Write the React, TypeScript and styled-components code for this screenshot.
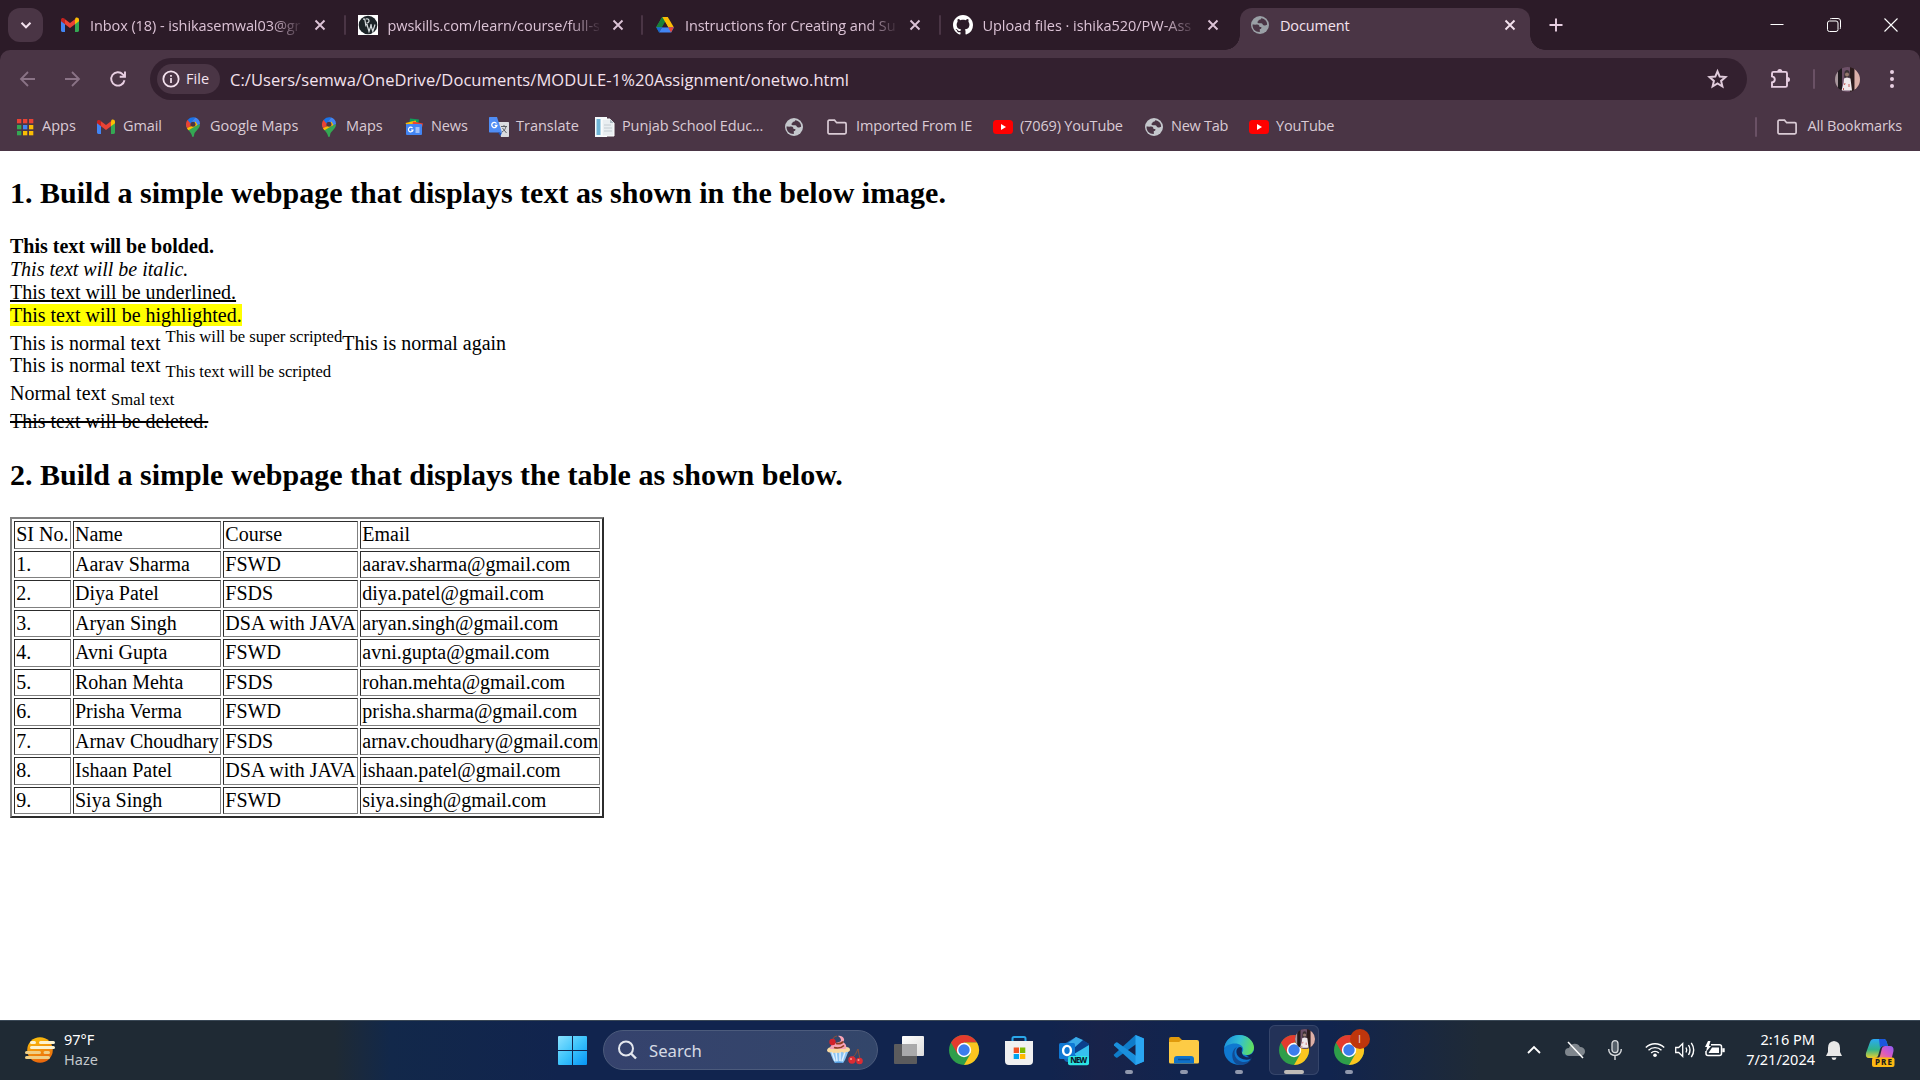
import React from 'react';
import styled, { createGlobalStyle } from 'styled-components';

const Global = createGlobalStyle`
  body { margin: 0; background: #fff; overflow: hidden; }
  * { box-sizing: border-box; }
`;

const ui = `'Open Sans', 'Noto Sans', sans-serif`;

const Screen = styled.div`
  width: 1920px;
  height: 1080px;
  display: flex;
  flex-direction: column;
  overflow: hidden;
  background: #2c1b28;
`;

/* ---------- tab strip ---------- */

const TabStrip = styled.div`
  height: 50px;
  flex: none;
  display: flex;
  align-items: stretch;
  padding-left: 8px;
  background: #2c1b28;
  font-family: ${ui};
`;
const TabSearch = styled.button`
  width: 35px;
  height: 34px;
  margin: 8px 5px 0 0;
  padding: 0;
  border: 0;
  border-radius: 12px;
  background: #4a3545;
  display: grid;
  place-items: center;
`;
const Tab = styled.div<{ $last?: boolean }>`
  width: 297.5px;
  flex: none;
  display: flex;
  align-items: center;
  padding: 0 0 0 12px;
  border: 0;
  &::after {
    content: '';
    width: 2px;
    height: 20px;
    border-radius: 1px;
    margin-left: auto;
    background: ${p => (p.$last ? 'transparent' : '#4a3545')};
  }
`;
const TabTitle = styled.span<{ $ls: number }>`
  width: 211px;
  margin-left: 10px;
  padding-top: 1px;
  font-size: 14.5px;
  letter-spacing: ${p => p.$ls}px;
  line-height: 20px;
  color: #dcc3d6;
  white-space: nowrap;
  mask-image: linear-gradient(90deg, #000 calc(100% - 30px), transparent calc(100% + 3px));
`;
const TabClose = styled.span`
  width: 20px;
  height: 20px;
  margin-left: 9px;
  display: grid;
  place-items: center;
`;
const ActiveTab = styled.div`
  width: 290px;
  height: 42px;
  flex: none;
  margin-top: 8px;
  padding: 0 10px 8px;
  display: flex;
  align-items: center;
  justify-content: space-between;
  border-radius: 12px 12px 0 0;
  background: #4a3545;
  color: #f4e2ee;
  font-size: 14.5px;
`;
const ActiveLabel = styled.span`
  display: flex;
  align-items: center;
  gap: 10px;
  letter-spacing: -0.15px;
`;
const Flare = styled.span<{ $side: 'left' | 'right' }>`
  width: 15px;
  height: 15px;
  flex: none;
  align-self: flex-end;
  margin-left: ${p => (p.$side === 'left' ? '-13px' : '0')};
  background: radial-gradient(circle at ${p => (p.$side === 'left' ? '0 0' : '100% 0')}, transparent 14.5px, #4a3545 15px);
`;
const NewTab = styled.span`
  width: 20px;
  height: 20px;
  margin: 15px 0 0 1px;
`;
const WindowControls = styled.div`
  margin-left: auto;
  padding-right: 1px;
  display: flex;
`;
const WindowButton = styled.span`
  width: 57px;
  height: 49px;
  display: grid;
  place-items: center;
`;

/* ---------- toolbar ---------- */

const Toolbar = styled.div`
  height: 101px;
  flex: none;
  display: flex;
  flex-direction: column;
  border-radius: 10px 10px 0 0;
  background: #4a3545;
  font-family: ${ui};
`;
const NavRow = styled.div`
  height: 51px;
  display: flex;
  align-items: center;
  padding: 7px 0 0 18px;
`;
const NavIcon = styled.span<{ $gap: number }>`
  width: 20px;
  height: 20px;
  margin-right: ${p => p.$gap}px;
`;
const Omnibox = styled.div`
  width: 1597px;
  height: 42px;
  display: flex;
  align-items: center;
  padding: 0 19px 0 7px;
  border-radius: 21px;
  background: #33202f;
`;
const FileChip = styled.span`
  width: 63px;
  height: 30px;
  display: flex;
  align-items: center;
  gap: 6px;
  padding: 0 0 1px 5px;
  border-radius: 15px;
  background: #4a3545;
  color: #f4e2ee;
  font-size: 14.5px;
  font-weight: 500;
  letter-spacing: 0.1px;
`;
const Url = styled.span`
  margin-left: 10px;
  padding-top: 1px;
  flex: 1;
  color: #f4e2ee;
  font-size: 16.5px;
  letter-spacing: 0.07px;
  line-height: 24px;
`;
const Extension = styled.span`
  width: 22px;
  height: 22px;
  margin-left: 23px;
`;
const Divider = styled.span<{ $ml: number; $mr: number }>`
  width: 2px;
  height: 20px;
  margin: 0 ${p => p.$mr}px 0 ${p => p.$ml}px;
  border-radius: 1px;
  background: #6a5165;
`;
const MenuDots = styled.span`
  width: 20px;
  height: 20px;
  margin-left: 22px;
`;

const BookmarkRow = styled.div`
  height: 50px;
  display: flex;
  align-items: center;
  padding: 1px 0 0 15px;
`;
const Bookmark = styled.span<{ $w: number; $gap?: number }>`
  width: ${p => p.$w}px;
  flex: none;
  display: flex;
  align-items: center;
  gap: ${p => p.$gap ?? 7}px;
  color: #dacbd5;
  white-space: nowrap;
`;
const BookmarkText = styled.span<{ $ls: number }>`
  padding-bottom: 2px;
  font-size: 14.5px;
  line-height: 20px;
  letter-spacing: ${p => p.$ls}px;
`;
const BookmarkEnd = styled.div`
  margin-left: auto;
  display: flex;
  align-items: center;
`;

/* ---------- document ---------- */

const Page = styled.main`
  flex: 1;
  min-height: 0;
  padding: 0 10px;
  background: #fff;
  color: #000;
  font-family: 'Liberation Serif', 'Times New Roman', serif;
  font-size: 20px;
`;
const Heading = styled.h2`
  margin: 24.9px 0;
  font-size: 30px;
  font-weight: bold;
`;
const Marked = styled.mark`
  background: #ff0;
  color: #000;
`;
const Underlined = styled.u`
  text-decoration-thickness: 2px;
`;
const Deleted = styled.del`
  text-decoration-thickness: 2px;
`;
const Raised = styled.sup`
  font-size: 16.667px;
`;
const Lowered = styled.sub`
  font-size: 16.667px;
`;
const Table = styled.table`
  border: 2px solid;
  border-color: #808080 #2c2c2c #2c2c2c #808080;
  border-spacing: 2.5px;
  font-size: 20px;
`;
const Cell = styled.td`
  padding: 1.25px;
  border: 1px solid;
  border-color: #2c2c2c #808080 #808080 #2c2c2c;
`;

/* ---------- taskbar ---------- */

const Taskbar = styled.footer`
  height: 60px;
  flex: none;
  display: flex;
  align-items: center;
  box-shadow: inset 0 1px 0 #3a4856;
  background: linear-gradient(90deg, #1f2a34 0, #1f2a34 335px, #12284a 390px, #11244e 560px, #11244e 1050px, #18234a 1100px, #11244e 1180px, #11244e 1330px, #1f2a36 1480px, #1f2a36 100%);
  color: #fff;
  font-family: 'Noto Sans', 'Open Sans', sans-serif;
`;
const Weather = styled.div`
  width: 558px;
  display: flex;
  align-items: center;
  gap: 9px;
  padding-left: 25px;
`;
const TwoLines = styled.div<{ $right?: boolean }>`
  display: flex;
  flex-direction: column;
  padding-bottom: 3px;
  text-align: ${p => (p.$right ? 'right' : 'left')};
  font-size: 14.5px;
  line-height: 20px;
`;
const Muted = styled.span`
  color: #c3c8cc;
`;
const SearchBox = styled.div`
  width: 275px;
  height: 40px;
  margin: 0 16px 0 16px;
  display: flex;
  align-items: center;
  border: 1px solid #4c5b7c;
  border-radius: 20px;
  padding: 0 14px;
  background: linear-gradient(90deg, #35426d, #33466a);
`;
const SearchText = styled.span`
  flex: 1;
  margin-left: 11px;
  color: #d5dae4;
  font-size: 16.7px;
`;
const Apps = styled.div`
  display: flex;
  margin-left: 12px;
`;
const AppSlot = styled.span<{ $active?: boolean }>`
  width: ${p => (p.$active ? 50 : 55)}px;
  height: 50px;
  flex: none;
  margin: 0 ${p => (p.$active ? 2.5 : 0)}px;
  display: flex;
  flex-direction: column;
  align-items: center;
  justify-content: space-between;
  padding: 10px 0 1px;
  border-radius: 6px;
  box-shadow: ${p => (p.$active ? 'inset 0 0 0 1px #35456a' : 'none')};
  background: ${p => (p.$active ? '#233258' : 'transparent')};
`;
const Running = styled.span<{ $w: number; $c: string }>`
  width: ${p => p.$w}px;
  height: 4px;
  border-radius: 2px;
  background: ${p => p.$c};
`;
const Tray = styled.div`
  margin-left: auto;
  display: flex;
  align-items: center;
  padding-right: 25px;
`;
const TrayIcon = styled.span<{ $w: number; $ml: number }>`
  width: ${p => p.$w}px;
  height: 24px;
  margin-left: ${p => p.$ml}px;
  display: grid;
  place-items: center;
`;
const Clock = styled(TwoLines)`
  width: 72px;
  margin-left: 18px;
  white-space: nowrap;
`;

/* ---------- icons ---------- */

const Drawing = styled.svg`
  display: block;
  flex: none;
  overflow: visible;
`;
const Svg = ({ w = 20, h = w, box = '0 0 20 20', children }: { w?: number; h?: number; box?: string; children: React.ReactNode }) => (
  <Drawing width={w} height={h} viewBox={box} fill="none">{children}</Drawing>
);
const Close = ({ c = '#dcc3d6' }) => (
  <Svg><path d="M5.500 5.500l9 9M14.500 5.500l-9 9" stroke={c} strokeWidth="1.900" /></Svg>
);
const Gmail = () => (
  <Svg>
    <path d="M1 5v10.600c0 .8.600 1.400 1.400 1.400H5V8z" fill="#4285f4" />
    <path d="M19 5v10.600c0 .8-.6 1.400-1.400 1.400H15V8z" fill="#34a853" />
    <path d="M15 4.200v5l4-3V4.700c0-1.900-2.200-2.800-3.500-1.700z" fill="#fbbc04" />
    <path d="M5 9.200v-5l5 3.800 5-3.800v5L10 13z" fill="#ea4335" />
    <path d="M1 4.700v1.500l4 3v-5L4.500 3.500C3 2.400 1 3 1 4.700z" fill="#c5221f" />
  </Svg>
);
const Drive = () => (
  <Svg>
    <path d="M7.200 2h5.600L10 6.900 4.200 17 1.200 12.300z" fill="#34a853" />
    <path d="M7.200 2h5.600l6 10.300h-5.700z" fill="#fbbc04" />
    <path d="M7.200 2L10 6.900 7 12.300H1.200z" fill="#188038" />
    <path d="M7 12.300h12l-2.800 5.200H4z" fill="#4285f4" />
    <path d="M1.200 12.300H7l-3 5.200z" fill="#1967d2" />
    <path d="M13.100 12.300h5.700L16 17.500z" fill="#ea4335" />
    <path d="M10 7l3 5.300H7z" fill="#2c1b28" />
  </Svg>
);
const Github = () => (
  <Svg w={20} box="0 0 16 16">
    <path fill="#fff" d="M8 0C3.580 0 0 3.580 0 8c0 3.540 2.290 6.530 5.470 7.590.4.070.55-.17.55-.38 0-.19-.01-.82-.01-1.490-2.010.37-2.530-.49-2.690-.94-.09-.23-.48-.94-.82-1.130-.28-.15-.68-.52-.01-.53.63-.01 1.080.58 1.230.82.72 1.210 1.870.87 2.330.66.07-.52.28-.87.51-1.070-1.780-.2-3.640-.89-3.640-3.950 0-.87.31-1.590.82-2.150-.08-.2-.36-1.020.08-2.120 0 0 .67-.21 2.200.82.64-.18 1.320-.27 2-.27s1.360.09 2 .27c1.530-1.040 2.200-.82 2.200-.82.44 1.100.16 1.920.08 2.120.51.56.82 1.270.82 2.150 0 3.070-1.870 3.750-3.650 3.950.29.25.54.73.54 1.480 0 1.070-.01 1.930-.01 2.200 0 .21.15.46.55.38A8.010 8.010 0 0 0 16 8c0-4.420-3.580-8-8-8z" />
  </Svg>
);
const Globe = ({ c = '#c4c7cc', bg = '#4a3545' }) => (
  <Svg>
    <circle cx="10" cy="10" r="9" fill={c} />
    <path d="M2.500 9.500c2 .2 3.400.2 4.500 0 2.400.1 2.500 1.500 2.500 2.500h1.700c.8 1.300-.3 2-1.400 2.100v2.900c-4.300.2-7.400-2.800-7.300-7.500z" fill={bg} />
    <path d="M11.200 3.200c-.2 1.300-1 1.500-2.100 1.600-.8.300-.3 1.500-1.500 1.700-.9 1.500 1.400 2 3.400 1.800 1.900 0 1.600 2.300 3.500 2.300 1 0 1.500-.8 2.600-.9.300-2.900-2-6-5.900-6.500z" fill={bg} />
  </Svg>
);
const Pw = () => (
  <Svg>
    <rect width="20" height="20" fill="#fff" />
    <circle cx="10" cy="10" r="9.300" fill="#1c2428" />
    <path d="M5 4.200h1.800L8 11.500M8 4c3.200-1.200 4.500 3.600.5 4.200" stroke="#d5dbdd" strokeWidth="1.200" />
    <path d="M7.500 9.500h2M9 9.500l2 7 2-6 1.800 6 2.200-7M12 10h2" stroke="#d5dbdd" strokeWidth="1.200" />
  </Svg>
);
const AppsGrid = () => (
  <Svg>
    {['#ea4335', '#ea4335', '#ea4335', '#34a853', '#4285f4', '#fbbc04', '#34a853', '#fbbc04', '#fbbc04'].map((c, i) => (
      <rect key={i} x={2 + (i % 3) * 6} y={2 + Math.floor(i / 3) * 6} width="4.300" height="4.300" fill={c} />
    ))}
  </Svg>
);
const Pin = () => (
  <Svg>
    <path d="M5 12.300C3.700 10.600 3 9.200 3 7.500L6.500 9c.5 2 1 3 2 4.500l2 5.500c-.6 0-.8-.6-1-1.500-.7-2.200-2.600-3-4.500-5.200z" fill="#34a853" />
    <path d="M10 20c-.9 0-1-1-1.300-2-.8-2.200-2.100-3.500-3.500-5.300L12.500 9 17 7c0 5.500-5.500 7-5.900 11-.2 1-.3 2-1.100 2z" fill="#34a853" />
    <path d="M3 7.300C3 5.500 3.700 4 4.700 2.800L8.500 6l-1 3-3 3C3.500 10.600 3 9 3 7.300z" fill="#ea4335" />
    <path d="M4.600 3C7 0 10 0 12.300.5L7.500 6.500z" fill="#1a73e8" />
    <path d="M12.200.5c2.500.8 4.800 3 4.800 6.500L12.500 9 8 5.500z" fill="#4285f4" />
    <path d="M7.500 9.500l5-5 2 3.500-9 5.200c-.8-.8-1.200-1.500-1.500-2z" fill="#fbbc04" />
    <circle cx="10" cy="7.200" r="2.500" fill="#4a3545" />
  </Svg>
);
const News = () => (
  <Svg>
    <path d="M6 1.500l9 1-1 6H5z" fill="#0f9d58" />
    <path d="M1.500 6l10-2.500L14 9H3z" fill="#fbbc04" />
    <path d="M9 4.500l10 2-1 4H8z" fill="#ea4335" />
    <rect x="2" y="7" width="16" height="11" rx="1" fill="#4285f4" />
    <path d="M8.500 11a2.300 2.300 0 1 0 .5 2H7M11.500 11h4M11.500 13h4M11.500 15h4" stroke="#fff" strokeWidth="1.200" />
  </Svg>
);
const Translate = () => (
  <Svg>
    <path d="M8 5h11c.6 0 1 .4 1 1v13c0 .6-.4 1-1 1h-7z" fill="#dadce0" />
    <path d="M1 0h7l5 15.500H1c-.6 0-1-.4-1-1V1c0-.6.400-1 1-1z" fill="#4f8df5" />
    <path d="M9 15.500h4L11.500 19z" fill="#1a56c4" />
    <path d="M7.500 6.500a2.600 2.600 0 1 0 .4 2H5.700" stroke="#fff" strokeWidth="1.300" />
    <path d="M12 9.500h6M15 8v1.500M17 9.500c-.5 2.500-2 4.500-4 5.500M13.500 11l4 5" stroke="#5f6368" strokeWidth="1" />
  </Svg>
);
const Paper = () => (
  <Svg>
    <rect x="0" y="0" width="12" height="20" fill="#f5fafc" />
    <rect x="1.500" y="2" width="4" height="16" fill="#6fb4d6" />
    <path d="M7 2h8l4 4v13H7z" fill="#e9eef1" stroke="#fff" strokeWidth="1" />
    <path d="M9 8h7M9 11h8M9 14h8" stroke="#c3ccd2" />
    <path d="M15 2v4h4z" fill="#aebac2" />
  </Svg>
);
const Folder = () => (
  <Svg>
    <path d="M1 4.500c0-.8.500-1.300 1.200-1.300h5.300l2.200 2.500h8.200c.7 0 1.200.5 1.200 1.200v8.700c0 .7-.5 1.200-1.200 1.200H2.200c-.7 0-1.200-.5-1.200-1.200z" stroke="#dacbd5" strokeWidth="1.700" />
  </Svg>
);
const YouTube = () => (
  <Svg>
    <rect x="0" y="3" width="20" height="14" rx="3.500" fill="#f00" />
    <path d="M8 7v6l5-3z" fill="#fff" />
  </Svg>
);
const Avatar = ({ s }: { s: number }) => (
  <Svg w={s} box="0 0 25 25">
    <clipPath id={`av${s}`}><circle cx="12.500" cy="12.500" r="12.500" /></clipPath>
    <g clipPath={`url(#av${s})`}>
      <path d="M0 0h25v25H0z" fill="#46303a" />
      <path d="M0 0h3v25H0z" fill="#a8979d" />
      <path d="M3 0h4v25H3z" fill="#1f1a1e" />
      <path d="M7 0h8v25H7z" fill="#6d5068" />
      <path d="M15 0h4.500v25H15z" fill="#2c1c1c" />
      <path d="M19.500 0h5.500v25h-5.500z" fill="#dcb0a8" />
      <path d="M9.500 5.500c0-3.500 5-3.500 5 0l.5 5H9z" fill="#3b3236" />
      <circle cx="12" cy="7.500" r="2" fill="#94786e" />
      <path d="M9 11.500l3-1 3.500 1 1.500 12H6.500l2-7z" fill="#efe9ec" />
      <path d="M10 16l-.5 2M14 17v3M8.500 21v2" stroke="#c65a55" />
    </g>
  </Svg>
);
const Chrome = () => (
  <Svg w={30} box="0 0 30 30">
    <circle cx="15" cy="15" r="15" fill="#2e9e4a" />
    <path d="M2 7.500A15 15 0 0 1 28 7.500H15L8.500 18.700z" fill="#e33b2e" />
    <path d="M28 7.500A15 15 0 0 1 15 30L21.500 18.700 15 7.500z" fill="#fcc61f" />
    <circle cx="15" cy="15" r="7.200" fill="#fff" />
    <circle cx="15" cy="15" r="5.700" fill="#3b7ded" />
  </Svg>
);
const BadgeHost = styled.span`
  position: relative;
  width: 30px;
  height: 30px;
`;
const Badge = styled.span`
  position: absolute;
  left: 16px;
  top: -6px;
  width: 20px;
  height: 20px;
`;
const BadgeLetter = styled.span`
  display: grid;
  place-items: center;
  width: 20px;
  height: 20px;
  border-radius: 50%;
  background: #bf360c;
  color: #e8c5b8;
  font: 11px 'Liberation Sans', Arial, sans-serif;
`;
const ChromeBadge = ({ children }: { children: React.ReactNode }) => (
  <BadgeHost><Chrome /><Badge>{children}</Badge></BadgeHost>
);
const Start = () => (
  <Svg w={29} box="0 0 29 29">
    <defs><linearGradient id="win" x1="0" y1="0" x2="29" y2="29" gradientUnits="userSpaceOnUse"><stop stopColor="#8be2ff" /><stop offset=".5" stopColor="#3cc3fb" /><stop offset="1" stopColor="#0695f5" /></linearGradient></defs>
    <path d="M1 0h13v14H0V1q0-1 1-1zM15 0h13q1 0 1 1v13H15zM0 15h14v14H1q-1 0-1-1zM15 15h14v13q0 1-1 1H15z" fill="url(#win)" />
  </Svg>
);
const Sundae = () => (
  <Svg w={36} h={30} box="0 0 36 30">
    <path d="M2 15h20l-4 10-2 3H8l-2-3z" fill="#8cc4f2" />
    <path d="M5 17l3 9M9 17l1 9M13 17v9M18 17l-3 9" stroke="#dff1ff" strokeWidth="1.500" />
    <path d="M7 28q5-3 10 0z" fill="#4d97dc" />
    <path d="M0 15q1-3 5-3h14q4 0 4 3c-1 3-4 1-6 3-2-2-4 0-6 0-3-1-4 1-6-1-3 1-5 0-5-2z" fill="#f8d9a0" />
    <path d="M3 14c0-4 4-6 9-7 4-1 1-5-1-6 5-1 8 4 5 6 4 2 4 7 2 7z" fill="#f7a3b6" />
    <path d="M7 12.500c4 1 8 0 10-2M9 8.500c3 .5 6 0 7-2" stroke="#8f3f22" strokeWidth="1.700" />
    <circle cx="5.500" cy="7" r="3.200" fill="#d3222b" />
    <path d="M6 4q1-3 4-3M25 23q4-3 6-9 1 6 2 10" stroke="#87503a" strokeWidth="1" />
    <circle cx="25" cy="25" r="3.700" fill="#dd2c33" /><circle cx="32.500" cy="26" r="3.300" fill="#dd2c33" />
    <circle cx="24" cy="24" r="1" fill="#ff9c94" /><circle cx="31.500" cy="25" r="1" fill="#ff9c94" />
  </Svg>
);
const TaskView = () => (
  <Svg w={30} box="0 0 30 30">
    <defs><linearGradient id="tv" x2="1" y2="1"><stop stopColor="#fff" /><stop offset="1" stopColor="#dcdcdc" /></linearGradient></defs>
    <rect x="8" y="1" width="22" height="20" rx="1" fill="url(#tv)" />
    <rect x="0" y="9" width="23" height="20" rx="1" fill="#5b5b5d" />
    <path d="M8 9h15v12H8z" fill="#a9a9ab" />
  </Svg>
);
const Store = () => (
  <Svg w={30} box="0 0 30 30">
    <path d="M8.500 8V3.500q0-1.500 1.500-1.500h10q1.500 0 1.500 1.500V8" stroke="#2aa7ea" strokeWidth="2" />
    <path d="M1 6h28v20q0 4-4 4H5q-4 0-4-4z" fill="#f0f0f0" />
    <path d="M9.700 12.500H15V18H9.700z" fill="#f25022" /><path d="M16 12.500h5.300V18H16z" fill="#7fba00" />
    <path d="M9.700 19H15v5H9.700z" fill="#00a4ef" /><path d="M16 19h5.300v5H16z" fill="#ffb900" />
  </Svg>
);
const Outlook = () => (
  <Svg w={30} h={30} box="0 0 30 30">
    <path d="M5 9L17 2l13 7v14q0 4-4 4H9q-4 0-4-4z" fill="#1567b8" />
    <path d="M14 10L24 5l6 4v3L16 20z" fill="#0b3f8c" /><path d="M15 19l15-9v13l-6 4z" fill="#36c0ee" />
    <path d="M9 8l8-6 7 3-9 8z" fill="#3aaae8" />
    <rect x="0" y="8" width="16" height="16" rx="1.500" fill="#0f78d4" />
    <ellipse cx="8" cy="15.500" rx="3.900" ry="4.600" stroke="#fff" strokeWidth="2.400" />
    <rect x="9" y="21" width="21" height="9.200" rx="2" fill="#2ce4e4" />
    <text x="11.300" y="28.400" fontSize="8" fontWeight="800" textLength="17" fill="#0a1a2e" fontFamily="Noto Sans, sans-serif">NEW</text>
  </Svg>
);
const VsCode = () => (
  <Svg w={30} box="0 0 30 30">
    <path d="M21.500 0L0 19.500q-.3 1 .2 1.500l1.800 1.500q.7.500 1.500 0L30 3.500z" fill="#0f7cc9" />
    <path d="M21.500 30L0 10.500q-.3-1 .2-1.500L2 7.500q.7-.5 1.500 0L30 26.500z" fill="#1a8fdc" />
    <path d="M21.500 0L30 3.500v23L21.500 30z" fill="#2aa6f2" />
  </Svg>
);
const Explorer = () => (
  <Svg w={30} box="0 0 30 30">
    <path d="M0 4q0-2 2-2h8l3 3v6H0z" fill="#e09a0c" />
    <path d="M0 7h10l3-2h15q2 0 2 2v20q0 1.500-1.500 1.500h-27Q0 28.500 0 27z" fill="#fdcb45" />
    <path d="M5 28.500V24q0-3 3-3h14q3 0 3 3v4.500z" fill="#0f72c9" />
    <path d="M9 24.500h12" stroke="#0a4d94" strokeWidth="1.500" />
  </Svg>
);
const Edge = () => (
  <Svg w={30} box="0 0 30 30">
    <defs>
      <linearGradient id="eg" x1="0" y1=".3" x2="1" y2=".5"><stop stopColor="#1b90dc" /><stop offset=".5" stopColor="#32bfd4" /><stop offset="1" stopColor="#62e05a" /></linearGradient>
    </defs>
    <circle cx="15" cy="15" r="15" fill="#0f78d0" />
    <path d="M30 15q-1 5-8 5.500l6.500 3.200Q31 19 30 15z" fill="#11244e" />
    <path d="M.2 13C1.500 5 7.500 0 15 0c9 0 15 6.500 15 12.500 0 5-4 7.500-7.500 7.500-3 0-4.500-1-4.500-2 0-.8 1.200-1.500 1.200-3.700C19.200 11 15.500 8.500 11 8.500 5.500 8.500 1.500 11 .2 13z" fill="url(#eg)" />
    <path d="M13 12c-4 3-3.500 12 4 14.500 4 1.300 8 0 10.500-2.500-2.500 4-7 6.500-12 6C7 29 6 15 13 12z" fill="#124c94" />
    <path d="M18 18c-1-3 1.500-5-1.500-6-5 0-5.500 7-1 10.500 5 3 10 2.500 12.500.5.500-1 .5-1.500-.5-1.500-4 2-9 0-9.500-3.500z" fill="#11275a" />
  </Svg>
);
const Haze = () => (
  <Svg w={30} h={26} box="0 0 30 26">
    <defs><linearGradient id="sun" x2=".3" y2="1"><stop stopColor="#fcc70c" /><stop offset="1" stopColor="#ea6a0c" /></linearGradient></defs>
    <circle cx="15" cy="13" r="12.800" fill="url(#sun)" />
    <path d="M6.500 5.500h3M15.500 5.500h13M6.500 10.500h22" stroke="#fdf3d0" strokeWidth="3" strokeLinecap="round" />
    <path d="M1.500 15.500h13M20 15.500h3.500M1.500 20.500h22" stroke="#f0cf85" strokeWidth="3" strokeLinecap="round" />
  </Svg>
);
const Copilot = () => (
  <Svg w={30} h={30} box="0 0 30 30">
    <defs>
      <linearGradient id="c1" x2="0" y2="1"><stop stopColor="#2ba9f5" /><stop offset=".55" stopColor="#30b48c" /><stop offset="1" stopColor="#e9cf2d" /></linearGradient>
      <linearGradient id="c2" x1="1" x2="0" y2="1"><stop stopColor="#8b5cf6" /><stop offset=".5" stopColor="#d958c4" /><stop offset="1" stopColor="#fb8a5c" /></linearGradient>
    </defs>
    <path d="M9 1h10q2 0 3 4l1 3h-5q-2 0-3 3l-2 7q-1 2-3 2H4q-4 0-3-5L5 4q1-3 4-3z" fill="url(#c1)" />
    <path d="M14 1h5q2 0 3 4l1 3h-5q-2 0-3 2z" fill="#1b56dd" />
    <path d="M20 8h5q4 0 3.500 5l-2 8H12q2 0 3-3l2-8q1-2 3-2z" fill="url(#c2)" />
    <rect x="7" y="19.500" width="22.500" height="9.500" rx="2" fill="#fdb813" />
    <text x="10" y="27.300" fontSize="8" fontWeight="800" textLength="17" fill="#1c1c1c" fontFamily="Noto Sans, sans-serif">PRE</text>
  </Svg>
);

/* ---------- data ---------- */

const tabs = [
  { icon: <Gmail />, title: 'Inbox (18) - ishikasemwal03@gr', ls: -0.08 },
  { icon: <Pw />, title: 'pwskills.com/learn/course/full-s', ls: -0.06 },
  { icon: <Drive />, title: 'Instructions for Creating and Su', ls: -0.12 },
  { icon: <Github />, title: 'Upload files · ishika520/PW-Ass', ls: -0.04 },
];
const bookmarks = [
  { icon: <AppsGrid />, text: 'Apps', w: 81, ls: 0 },
  { icon: <Gmail />, text: 'Gmail', w: 87, ls: -0.1 },
  { icon: <Pin />, text: 'Google Maps', w: 136, ls: 0 },
  { icon: <Pin />, text: 'Maps', w: 85, ls: -0.1 },
  { icon: <News />, text: 'News', w: 85, ls: -0.1 },
  { icon: <Translate />, text: 'Translate', w: 106, ls: 0 },
  { icon: <Paper />, text: 'Punjab School Educ...', w: 189, ls: -0.12 },
  { icon: <Globe />, text: '', w: 43, ls: 0 },
  { icon: <Folder />, text: 'Imported From IE', w: 166, gap: 9, ls: -0.14 },
  { icon: <YouTube />, text: '(7069) YouTube', w: 151, ls: -0.16 },
  { icon: <Globe />, text: 'New Tab', w: 105, ls: -0.25 },
  { icon: <YouTube />, text: 'YouTube', w: 90, ls: -0.2 },
];
const rows = [
  ['SI No.', 'Name', 'Course', 'Email'],
  ['1.', 'Aarav Sharma', 'FSWD', 'aarav.sharma@gmail.com'],
  ['2.', 'Diya Patel', 'FSDS', 'diya.patel@gmail.com'],
  ['3.', 'Aryan Singh', 'DSA with JAVA', 'aryan.singh@gmail.com'],
  ['4.', 'Avni Gupta', 'FSWD', 'avni.gupta@gmail.com'],
  ['5.', 'Rohan Mehta', 'FSDS', 'rohan.mehta@gmail.com'],
  ['6.', 'Prisha Verma', 'FSWD', 'prisha.sharma@gmail.com'],
  ['7.', 'Arnav Choudhary', 'FSDS', 'arnav.choudhary@gmail.com'],
  ['8.', 'Ishaan Patel', 'DSA with JAVA', 'ishaan.patel@gmail.com'],
  ['9.', 'Siya Singh', 'FSWD', 'siya.singh@gmail.com'],
];

export default function App() {
  return (
    <Screen>
      <Global />
      <TabStrip>
        <TabSearch><Svg w={14} box="0 0 14 14"><path d="M2.500 4.800L7 9.300l4.500-4.500" stroke="#f4e2ee" strokeWidth="2" /></Svg></TabSearch>
        {tabs.map((t, i) => (
          <Tab key={i} $last={i === 3}>
            {t.icon}
            <TabTitle $ls={t.ls}>{t.title}</TabTitle>
            <TabClose><Close /></TabClose>
          </Tab>
        ))}
        <Flare $side="left" />
        <ActiveTab>
          <ActiveLabel><Globe c="#9aa0a6" />Document</ActiveLabel>
          <Close c="#f4e2ee" />
        </ActiveTab>
        <Flare $side="right" />
        <NewTab><Svg><path d="M10 3.500v13M3.500 10h13" stroke="#e8cfe2" strokeWidth="1.900" /></Svg></NewTab>
        <WindowControls>
          <WindowButton><Svg w={14} box="0 0 14 14"><path d="M.5 6.500h13" stroke="#fff" /></Svg></WindowButton>
          <WindowButton><Svg w={14} box="0 0 14 14"><rect x=".5" y="3" width="10.500" height="10.500" rx="2" stroke="#fff" /><path d="M3 1q.5-.5 1.500-.5h6.500q2.500 0 2.500 2.500v6.500q0 1-.5 1.500" stroke="#fff" /></Svg></WindowButton>
          <WindowButton><Svg w={14} box="0 0 14 14"><path d="M.5.5l13 13M13.500.5l-13 13" stroke="#fff" strokeWidth="1.100" /></Svg></WindowButton>
        </WindowControls>
      </TabStrip>

      <Toolbar>
        <NavRow>
          <NavIcon $gap={24}><Svg><path d="M17 10H3.500M10 3L3 10l7 7" stroke="#8a7386" strokeWidth="1.800" /></Svg></NavIcon>
          <NavIcon $gap={26}><Svg><path d="M3 10h13.500M10 3l7 7-7 7" stroke="#8a7386" strokeWidth="1.800" /></Svg></NavIcon>
          <NavIcon $gap={22}><Svg><path d="M16.500 11.200A6.700 6.700 0 1 1 14.800 5.300L17 7.500M17 2.500v5.300h-5.300" stroke="#e8cfe2" strokeWidth="1.900" /></Svg></NavIcon>
          <Omnibox>
            <FileChip>
              <Svg w={18}><circle cx="10" cy="10" r="8.500" stroke="#f4e2ee" strokeWidth="2" /><path d="M10 9v5.500M10 5.500v2" stroke="#f4e2ee" strokeWidth="1.900" /></Svg>
              File
            </FileChip>
            <Url>C:/Users/semwa/OneDrive/Documents/MODULE-1%20Assignment/onetwo.html</Url>
            <Svg><path d="M9.500 2.300l2.200 5.300 5.800.5-4.400 3.800 1.300 5.600-4.900-3-4.900 3 1.300-5.600-4.400-3.800 5.800-.5z" stroke="#e0cbdb" strokeWidth="2" /></Svg>
          </Omnibox>
          <Extension><Svg w={22} box="0 0 22 22"><path d="M3.500 3.900h12q1.500 0 1.500 1.500v12q0 1.500-1.500 1.500H2v-4.500q2.800-.5 2.800-3T2 8.400v-3q0-1.500 1.500-1.500z" stroke="#e8cfe2" strokeWidth="1.900" /><path d="M7.300 3.500a2.500 2.500 0 0 1 5 0zM17.500 8.900a2.500 2.500 0 0 1 0 5z" fill="#e8cfe2" /></Svg></Extension>
          <Divider $ml={21} $mr={20} />
          <Avatar s={25} />
          <MenuDots><Svg><circle cx="10" cy="3" r="2" fill="#e8cfe2" /><circle cx="10" cy="10" r="2" fill="#e8cfe2" /><circle cx="10" cy="17" r="2" fill="#e8cfe2" /></Svg></MenuDots>
        </NavRow>
        <BookmarkRow>
          {bookmarks.map((b, i) => (
            <Bookmark key={i} $w={b.w} $gap={b.gap}>
              {b.icon}
              <BookmarkText $ls={b.ls}>{b.text}</BookmarkText>
            </Bookmark>
          ))}
          <BookmarkEnd>
            <Divider $ml={0} $mr={20} />
            <Bookmark $w={143} $gap={10.500}><Folder /><BookmarkText $ls={-0.17}>All Bookmarks</BookmarkText></Bookmark>
          </BookmarkEnd>
        </BookmarkRow>
      </Toolbar>

      <Page>
        <Heading>1. Build a simple webpage that displays text as shown in the below image.</Heading>
        <b>This text will be bolded.</b><br />
        <i>This text will be italic.</i><br />
        <Underlined>This text will be underlined.</Underlined><br />
        <Marked>This text will be highlighted.</Marked><br />
        This is normal text <Raised>This will be super scripted</Raised>This is normal again<br />
        This is normal text <Lowered>This text will be scripted</Lowered><br />
        Normal text <Lowered>Smal text</Lowered><br />
        <Deleted>This text will be deleted.</Deleted>
        <Heading>2. Build a simple webpage that displays the table as shown below.</Heading>
        <Table>
          <tbody>
            {rows.map(r => (
              <tr key={r[0]}>{r.map(c => <Cell key={c}>{c}</Cell>)}</tr>
            ))}
          </tbody>
        </Table>
      </Page>

      <Taskbar>
        <Weather>
          <Haze />
          <TwoLines><span>97°F</span><Muted>Haze</Muted></TwoLines>
        </Weather>
        <Start />
        <SearchBox>
          <Svg><circle cx="8" cy="8.500" r="7" stroke="#e4e7ee" strokeWidth="2" /><path d="M13 13.500l5 5" stroke="#e4e7ee" strokeWidth="2.400" /></Svg>
          <SearchText>Search</SearchText>
          <Sundae />
        </SearchBox>
        <TaskView />
        <Apps>
          <AppSlot><Chrome /></AppSlot>
          <AppSlot><Store /></AppSlot>
          <AppSlot><Outlook /></AppSlot>
          <AppSlot><VsCode /><Running $w={8} $c="#9098ad" /></AppSlot>
          <AppSlot><Explorer /><Running $w={8} $c="#9098ad" /></AppSlot>
          <AppSlot><Edge /><Running $w={8} $c="#9098ad" /></AppSlot>
          <AppSlot $active><ChromeBadge><Avatar s={20} /></ChromeBadge><Running $w={20} $c="#c0bcb8" /></AppSlot>
          <AppSlot><ChromeBadge><BadgeLetter>I</BadgeLetter></ChromeBadge><Running $w={8} $c="#9098ad" /></AppSlot>
        </Apps>
        <Tray>
          <TrayIcon $w={16} $ml={0}><Svg w={14} box="0 0 14 14"><path d="M1 10l6-6 6 6" stroke="#fff" strokeWidth="1.800" /></Svg></TrayIcon>
          <TrayIcon $w={20} $ml={23}><Svg w={20} h={16} box="0 0 20 16"><path d="M4 14a4 4 0 0 1 0-8 6 6 0 0 1 11-1 4.500 4.500 0 0 1 1 9z" fill="#7f868d" /><path d="M3 0l15 16" stroke="#fff" strokeWidth="1.500" /></Svg></TrayIcon>
          <TrayIcon $w={14} $ml={23}><Svg w={14} h={20} box="0 0 14 20"><rect x="4" y=".7" width="6" height="12" rx="3" fill="#56606a" stroke="#d8dbde" strokeWidth="1.300" /><path d="M.8 9v1a6.200 5.500 0 0 0 12.400 0V9M7 15.500V20" stroke="#d8dbde" strokeWidth="1.400" /></Svg></TrayIcon>
          <TrayIcon $w={20} $ml={23}><Svg w={20} h={16} box="0 0 20 16"><path d="M.8 5.500a13 13 0 0 1 18.400 0M3.500 8.300a9.200 9.200 0 0 1 13 0M6.200 11a5.300 5.300 0 0 1 7.600 0" stroke="#fff" strokeWidth="1.400" /><circle cx="10" cy="13.300" r="1.800" fill="#fff" /></Svg></TrayIcon>
          <TrayIcon $w={20} $ml={10}><Svg w={20} h={16} box="0 0 20 16"><path d="M.7 5.500h3l4-4v13l-4-4h-3z" stroke="#fff" strokeWidth="1.300" /><path d="M11 5.500q1.500 2.500 0 5M13.500 3q3 5 0 10M16.300.800q4.800 7.200 0 14.400" stroke="#fff" strokeWidth="1.400" /></Svg></TrayIcon>
          <TrayIcon $w={20} $ml={10}><Svg w={20} h={16} box="0 0 20 16"><path d="M6 2.800h8.500q2 0 2 2v6.700q0 2-2 2H3q-2 0-2-2V9" stroke="#fff" strokeWidth="1.500" /><path d="M7 5.500h7V11H3.500z" fill="#fff" /><path d="M18.500 6.200v4" stroke="#fff" strokeWidth="2.400" /><path d="M3-1L0 5h2l-1 5 5-6H4l1.500-5z" fill="#fff" /></Svg></TrayIcon>
          <Clock $right><span>2:16 PM</span><span>7/21/2024</span></Clock>
          <TrayIcon $w={16} $ml={11}><Svg w={16} h={19} box="0 0 16 19"><path d="M8 0q6 .5 6 7v4l2 4H0l2-4V7q0-6.500 6-7zM5.500 16.500h5q-.5 2.500-2.500 2.500t-2.500-2.500z" fill="#e8e8e8" /></Svg></TrayIcon>
          <TrayIcon $w={30} $ml={23}><Copilot /></TrayIcon>
        </Tray>
      </Taskbar>
    </Screen>
  );
}
